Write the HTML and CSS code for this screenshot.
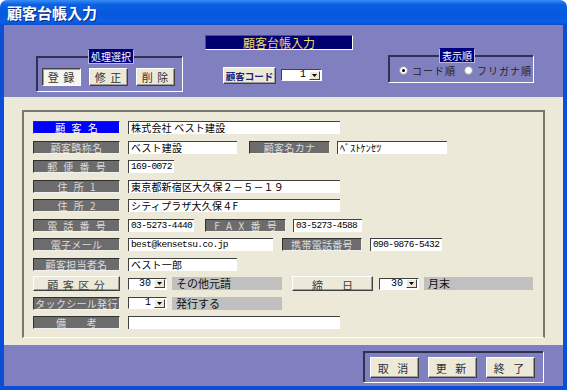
FILE: index.html
```html
<!DOCTYPE html>
<html lang="ja">
<head>
    <meta charset="UTF-8">
    <title>顧客台帳入力</title>
    <link rel="stylesheet" href="styles.css">
</head>
<body>

<div class="window">
    <div class="titlebar">顧客台帳入力</div>

    <div class="client">
        <!-- top controls -->
        <div class="top">
            <div class="group mode">
                <span class="legend">処理選択</span>
                <button class="btn pressed">登 録</button>
                <button class="btn">修 正</button>
                <button class="btn">削 除</button>
            </div>

            <div class="center">
                <div class="caption">顧客台帳入力</div>
                <div class="code-row">
                    <button class="btn code">顧客コード</button>
                    <div class="combo code-combo">
                        <span class="val">1</span>
                        <span class="drop"><svg width="5" height="3" viewBox="0 0 5 3"><polygon points="0,0 5,0 2.5,3" fill="#000"/></svg></span>
                    </div>
                </div>
            </div>

            <div class="group order">
                <span class="legend">表示順</span>
                <span class="radio"><span class="dot on"></span>コード順</span>
                <span class="radio second"><span class="dot"></span>フリガナ順</span>
            </div>
        </div>

        <!-- entry form -->
        <div class="panel">
            <div class="frame">
                <div class="row">
                    <span class="label active sp">顧 客 名</span>
                    <span class="field w212">株式会社 ベスト建設</span>
                </div>
                <div class="row">
                    <span class="label">顧客略称名</span>
                    <span class="field w109">ベスト建設</span>
                    <span class="label ml12 w81">顧客名カナ</span>
                    <span class="field ml7 w110">ﾍﾞｽﾄｹﾝｾﾂ</span>
                </div>
                <div class="row">
                    <span class="label sp">郵 便 番 号</span>
                    <span class="field mono w46">169-0072</span>
                </div>
                <div class="row">
                    <span class="label sp">住 所 1</span>
                    <span class="field w212">東京都新宿区大久保２－５－１９</span>
                </div>
                <div class="row">
                    <span class="label sp">住 所 2</span>
                    <span class="field w212">シティプラザ大久保４F</span>
                </div>
                <div class="row">
                    <span class="label sp">電 話 番 号</span>
                    <span class="field mono w66">03-5273-4440</span>
                    <span class="label sp ml11 w81">F A X 番 号</span>
                    <span class="field mono ml7 w69">03-5273-4588</span>
                </div>
                <div class="row">
                    <span class="label">電子メール</span>
                    <span class="field mono w145">best@kensetsu.co.jp</span>
                    <span class="label ml9 w80">携帯電話番号</span>
                    <span class="field mono ml8 w72">090-9876-5432</span>
                </div>
                <div class="row">
                    <span class="label">顧客担当者名</span>
                    <span class="field w109">ベスト一郎</span>
                </div>
                <div class="row">
                    <button class="btn raised">顧 客 区 分</button>
                    <div class="combo ml8 w39">
                        <span class="val">30</span>
                        <span class="drop"><svg width="5" height="3" viewBox="0 0 5 3"><polygon points="0,0 5,0 2.5,3" fill="#000"/></svg></span>
                    </div>
                    <span class="static ml5 w110">その他元請</span>
                    <button class="btn raised wide ml10">締　日</button>
                    <div class="combo ml6 w40">
                        <span class="val">30</span>
                        <span class="drop"><svg width="5" height="3" viewBox="0 0 5 3"><polygon points="0,0 5,0 2.5,3" fill="#000"/></svg></span>
                    </div>
                    <span class="static ml5 w109">月末</span>
                </div>
                <div class="row">
                    <span class="label">タックシール発行</span>
                    <div class="combo ml8 w39">
                        <span class="val">1</span>
                        <span class="drop"><svg width="5" height="3" viewBox="0 0 5 3"><polygon points="0,0 5,0 2.5,3" fill="#000"/></svg></span>
                    </div>
                    <span class="static ml5 w110">発行する</span>
                </div>
                <div class="row">
                    <span class="label">備　　考</span>
                    <span class="field w212"></span>
                </div>
            </div>
        </div>

        <!-- bottom actions -->
        <div class="footer">
            <div class="group actions">
                <button class="btn action">取 消</button>
                <button class="btn action">更 新</button>
                <button class="btn action">終 了</button>
            </div>
        </div>
    </div>
</div>

</body>
</html>
```

FILE: styles.css
```css
/* Page */
body {
    margin: 0;
    background: #ffffff;
    font-family: "Noto Sans CJK JP", "Noto Sans", sans-serif;
}

/* Window frame */
.window {
    width: 567px;
    height: 390px;
    display: flex;
    flex-direction: column;
}

.titlebar {
    height: 25px;
    line-height: 25px;
    padding-left: 7px;
    color: #ffffff;
    font-size: 15px;
    font-weight: bold;
    text-shadow: 1px 1px 0 #0a2a80;
    border-radius: 7px 7px 0 0;
    background: linear-gradient(180deg, #3b8cf5 0%, #0a61e4 18%, #0558dc 55%, #0a5fe6 85%, #0a4fcf 100%);
}

.client {
    flex: 1;
    display: flex;
    flex-direction: column;
    background: #8080c0;
    border: 4px solid #0b4fd8;
    border-top: none;
}

/* Shared buttons */
.btn {
    padding: 0;
    font-family: "Noto Sans CJK JP", sans-serif;
    font-size: 10px;
    color: #303030;
    background: #ece9d8;
    border: 1px solid;
    border-color: #ffffff #404040 #404040 #ffffff;
    box-shadow: inset -1px -1px 0 #a09e94;
    box-sizing: border-box;
}

.btn.pressed {
    background: #f6f5ef;
    border-color: #404040 #ffffff #ffffff #404040;
    box-shadow: inset 1px 1px 0 #a09e94;
}

/* Group boxes */
.group {
    position: relative;
    box-sizing: border-box;
    border: 1px solid;
    border-color: #303050 #ffffff #ffffff #303050;
    box-shadow: 1px 1px 0 #303050 inset;
}

.legend {
    position: absolute;
    top: -8px;
    height: 13px;
    line-height: 13px;
    padding: 0 2px;
    font-size: 10px;
    color: #ffffff;
    background: #000080;
    border: 1px solid #b8b8e0;
    border-top-color: #000080;
}

/* Top area */
.top {
    height: 72px;
    display: flex;
}

.mode {
    margin: 31px 0 0 32px;
    width: 147px;
    height: 36px;
    display: flex;
    gap: 8px;
    padding: 11px 0 0 5px;
}

.mode .legend {
    left: 51px;
}

.mode .btn {
    width: 39px;
    height: 18px;
    font-size: 11px;
    letter-spacing: 1px;
}

.center {
    margin: 10px 0 0 22px;
    width: 148px;
    display: flex;
    flex-direction: column;
}

.caption {
    height: 15px;
    line-height: 14px;
    text-align: center;
    font-size: 12px;
    color: #e6de6e;
    background: #000070;
    box-sizing: border-box;
    border: 1px solid;
    border-color: #505070 #ffffff #ffffff #505070;
}

.code-row {
    display: flex;
    align-items: flex-start;
    margin: 17px 0 0 18px;
}

.btn.code {
    width: 53px;
    height: 17px;
    color: #20207a;
    font-weight: bold;
    font-size: 9.5px;
}

.code-combo {
    width: 41px;
    margin: 2px 0 0 5px;
    background: #f2f0e6;
}

.order {
    margin: 30px 29px 0 auto;
    width: 146px;
    height: 28px;
    display: flex;
    align-items: center;
    padding: 2px 0 0 10px;
}

.order .legend {
    left: 50px;
}

.radio {
    display: flex;
    align-items: center;
    gap: 4px;
    font-size: 10px;
    color: #202020;
    letter-spacing: 1px;
}

.radio.second {
    margin-left: 8px;
}

.dot {
    width: 9px;
    height: 9px;
    border-radius: 50%;
    background: #ffffff;
    box-sizing: border-box;
    border: 1px solid #9090a0;
    display: flex;
    align-items: center;
    justify-content: center;
}

.dot.on::after {
    content: "";
    width: 3px;
    height: 3px;
    border-radius: 50%;
    background: #000000;
}

/* Form panel */
.panel {
    height: 248px;
    background: #ece9d8;
    padding: 13px 18px 0 18px;
    box-sizing: border-box;
}

.frame {
    height: 228px;
    box-sizing: border-box;
    border: 2px solid #7a786c;
    border-bottom: 1px solid #ffffff;
    padding: 9px 0 0 9px;
    display: flex;
    flex-direction: column;
    gap: 6.5px;
}

.row {
    display: flex;
    align-items: center;
    height: 13px;
}

.label {
    width: 87px;
    height: 13px;
    line-height: 11px;
    box-sizing: border-box;
    text-align: center;
    font-size: 10px;
    letter-spacing: 0.3px;
    white-space: pre;
    color: #dcdcdc;
    background: #6c6c6c;
    border: 1px solid;
    border-color: #303030 #f0f0f0 #f0f0f0 #303030;
}

.label.sp {
    letter-spacing: 2px;
    padding-left: 2px;
}

.label.active {
    background: #0000ff;
    color: #ffffff;
}

.field {
    margin-left: 8px;
    height: 13px;
    line-height: 12px;
    box-sizing: border-box;
    padding-left: 2px;
    font-size: 10px;
    letter-spacing: 0.2px;
    white-space: nowrap;
    overflow: hidden;
    color: #000000;
    background: #ffffff;
    border-top: 1px solid #404040;
    border-left: 1px solid #404040;
}

.field.mono {
    font-family: "Liberation Mono", "DejaVu Sans Mono", monospace;
    font-size: 9.5px;
    letter-spacing: -0.6px;
}

.btn.raised {
    width: 87px;
    height: 15px;
    font-size: 11px;
    color: #404040;
    letter-spacing: 1px;
    white-space: pre;
}

.btn.raised.wide {
    width: 81px;
    letter-spacing: 4px;
    padding-left: 4px;
}

.combo {
    height: 12px;
    display: flex;
    align-items: center;
    justify-content: flex-end;
    box-sizing: border-box;
    background: #ffffff;
    border: 1px solid;
    border-color: #404040 #ffffff #ffffff #404040;
    font-family: "Liberation Mono", monospace;
    font-size: 10px;
}

.combo .val {
    padding-right: 3px;
    line-height: 10px;
}

.drop {
    width: 11px;
    height: 9px;
    margin-right: 1px;
    display: flex;
    align-items: center;
    justify-content: center;
    box-sizing: border-box;
    background: #ece9d8;
    border: 1px solid;
    border-color: #ffffff #404040 #404040 #ffffff;
}

.static {
    height: 13px;
    line-height: 12px;
    padding-left: 4px;
    box-sizing: border-box;
    font-size: 11px;
    color: #101010;
    background: #c0c0c0;
}

/* Footer */
.footer {
    flex: 1;
    display: flex;
}

.actions {
    margin: 6px 19px 0 auto;
    width: 181px;
    height: 32px;
    display: flex;
    gap: 9px;
    padding: 5px 0 0 6px;
}

.btn.action {
    width: 49px;
    height: 21px;
    font-size: 11px;
    letter-spacing: 3px;
}

/* Widths and spacings */
.w39 { width: 39px; }
.w40 { width: 40px; }
.w46 { width: 46px; }
.w66 { width: 66px; }
.w69 { width: 69px; }
.w72 { width: 72px; }
.w80 { width: 80px; }
.w81 { width: 81px; }
.w109 { width: 109px; }
.w110 { width: 110px; }
.w145 { width: 145px; }
.w212 { width: 212px; }

.ml5 { margin-left: 5px; }
.ml6 { margin-left: 6px; }
.ml7 { margin-left: 7px; }
.ml8 { margin-left: 8px; }
.ml9 { margin-left: 9px; }
.ml10 { margin-left: 10px; }
.ml11 { margin-left: 11px; }
.ml12 { margin-left: 12px; }
```
